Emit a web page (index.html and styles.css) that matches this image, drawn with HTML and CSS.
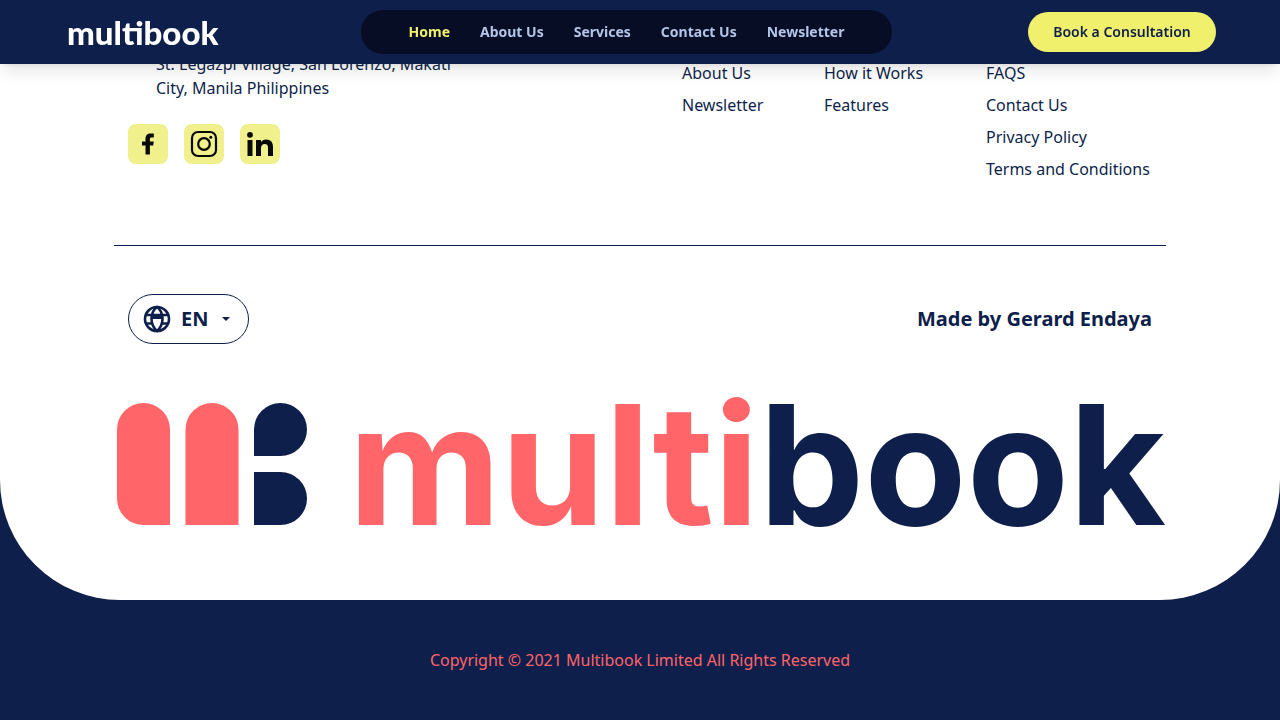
FILE: index.html
```html
<!DOCTYPE html>
<html lang="en">
<head>
<meta charset="utf-8">
<meta name="viewport" content="width=device-width, initial-scale=1">
<title>Multibook</title>
<link rel="stylesheet" href="styles.css">
</head>
<body>
<header class="topbar">
  <a class="brand" href="#">multibook</a>
  <nav class="menu">
    <a class="menu-link active" href="#">Home</a>
    <a class="menu-link" href="#">About Us</a>
    <button class="menu-link" type="button">Services</button>
    <a class="menu-link" href="#">Contact Us</a>
    <a class="menu-link" href="#">Newsletter</a>
  </nav>
  <button class="cta" type="button">Book a Consultation</button>
</header>
<footer class="footer">
  <div class="panel">
    <div class="info">
      <div class="contact">
        <address class="address">St. Legazpi Village, San Lorenzo, Makati City, Manila Philippines</address>
        <div class="socials">
          <a class="social" href="#" aria-label="Facebook">
            <svg viewBox="0 0 40 40"><path d="M17.500 30.500V21.500H14V17.500h3.500V15c0-3.800 2-5.500 5-5.500h3.300v4h-2.200c-1.300 0-1.700.6-1.700 1.700v2.300h3.900l-.6 4h-3.300v9z"/></svg>
          </a>
          <a class="social" href="#" aria-label="Instagram">
            <svg viewBox="0 0 40 40"><rect x="8" y="8" width="24" height="24" rx="6" fill="none" stroke="currentColor" stroke-width="2.200"/><circle cx="20" cy="20" r="5.800" fill="none" stroke="currentColor" stroke-width="2.200"/><circle cx="26.800" cy="13.200" r="1.500"/></svg>
          </a>
          <a class="social" href="#" aria-label="LinkedIn">
            <svg viewBox="0 0 40 40"><circle cx="10" cy="10.800" r="2.900"/><path d="M7.500 16h5v16h-5zM16 16h5v2.200c1-1.700 2.800-2.600 5-2.600 5 0 7 3 7 7.400v9h-5v-8c0-2.500-.8-4-3.200-4-2.500 0-3.800 1.700-3.800 4.300V32h-5z"/></svg>
          </a>
        </div>
      </div>
      <div class="links">
        <ul class="link-list">
          <li><a href="#">About Us</a></li>
          <li><a href="#">Newsletter</a></li>
        </ul>
        <ul class="link-list">
          <li><a href="#">How it Works</a></li>
          <li><a href="#">Features</a></li>
        </ul>
        <ul class="link-list">
          <li><a href="#">FAQS</a></li>
          <li><a href="#">Contact Us</a></li>
          <li><a href="#">Privacy Policy</a></li>
          <li><a href="#">Terms and Conditions</a></li>
        </ul>
      </div>
    </div>
    <hr class="divider">
    <div class="meta">
      <label class="language">
        <svg class="globe" viewBox="0 0 28 28" fill="none" stroke="currentColor" stroke-width="2.600" aria-hidden="true"><circle cx="14" cy="14" r="12"/><path d="M14 2C10 5 8.500 9 8.500 13.500S10.500 23 14 26c3.500-3 5.500-8 5.500-12.500S18 5 14 2zM3 10h22M3 18.500h6M19 18.500h6"/><path d="M9 9h10v5H9z" fill="currentColor" stroke="none"/></svg>
        <select class="language-select" aria-label="Language"><option>EN</option></select>
        <svg class="caret" viewBox="0 0 8 4" fill="currentColor" aria-hidden="true"><path d="M0 0h8L4 4z"/></svg>
      </label>
      <p class="credit">Made by Gerard Endaya</p>
    </div>
    <div class="logo">
      <svg class="logo-mark" viewBox="0 0 190 122" aria-hidden="true">
        <path class="coral" d="M0 26.500a26.500 26.500 0 0 1 53 0V122H26.500A26.500 26.500 0 0 1 0 95.500zM68.500 26.500a26.500 26.500 0 0 1 53 0V122h-53z"/>
        <path class="navy" d="M137 53V26.500A26.500 26.500 0 1 1 163.500 53zM137 69h26.500a26.500 26.500 0 0 1 0 53H137z"/>
      </svg>
      <span class="logo-word"><span class="coral">multi</span><span class="navy">book</span></span>
    </div>
  </div>
  <p class="copyright">Copyright © 2021 Multibook Limited All Rights Reserved</p>
</footer>
</body>
</html>
```
FILE: styles.css
```css
:root {
  --navy: #0e1f4b;
  --coral: #ff6569;
  --yellow: #f0f06d;
}
* { box-sizing: border-box; }
body {
  margin: 0;
  background: var(--navy);
  color: var(--navy);
  font: 16px/24px "Noto Sans", sans-serif;
}
a { color: inherit; text-decoration: none; }
p { margin: 0; }
button, select { font: inherit; color: inherit; border: 0; background: none; padding: 0; cursor: pointer; }

.topbar {
  position: fixed;
  top: 0;
  left: 0;
  right: 0;
  z-index: 1;
  display: flex;
  align-items: center;
  justify-content: space-between;
  height: 64px;
  padding: 0 64px;
  background: var(--navy);
  box-shadow: 0 10px 15px -3px rgba(0, 0, 0, .1), 0 4px 6px -4px rgba(0, 0, 0, .1);
}
.brand {
  flex: 0 0 161px;
  padding-left: 3px;
  color: #fff;
  font: 900 33px/40px Lato, sans-serif;
}
.menu {
  display: flex;
  align-items: center;
  gap: 30px;
  height: 44px;
  padding: 0 48px;
  border-radius: 22px;
  background: #060d24;
}
.menu-link { color: #b3c5e8; font-size: 14px; font-weight: 700; line-height: 20px; }
.menu-link.active { color: var(--yellow); }
.cta {
  min-width: 188px;
  height: 40px;
  padding: 0 24px;
  border-radius: 20px;
  background: var(--yellow);
  font-size: 14px;
  font-weight: 600;
}

.panel {
  padding: 52px 114px 72px;
  border-radius: 0 0 120px 120px;
  background: #fff;
}
.info { display: flex; justify-content: space-between; padding: 0 14px; }
.contact { flex: 0 1 336px; }
.address { padding-left: 28px; font-style: normal; }
.socials { display: flex; gap: 16px; margin-top: 24px; }
.social {
  width: 40px;
  height: 40px;
  border-radius: 8px;
  background: #f0f08c;
  color: #090903;
}
.social svg { display: block; fill: currentColor; }
.links { display: grid; grid-template-columns: 82px 102px 166px; gap: 60px; padding-top: 9px; }
.link-list {
  display: flex;
  flex-direction: column;
  gap: 8px;
  margin: 0;
  padding: 0;
  list-style: none;
}
.divider { margin: 64px 0 48px; border: 0; border-top: 1px solid var(--navy); }
.meta {
  display: flex;
  align-items: center;
  justify-content: space-between;
  padding: 0 14px;
  font-size: 20px;
  font-weight: 700;
}
.language {
  display: flex;
  align-items: center;
  height: 50px;
  padding: 0 18px 0 14px;
  border: 1px solid var(--navy);
  border-radius: 25px;
}
.globe { width: 28px; height: 28px; margin-right: 10px; }
.language-select { appearance: none; }
.caret { width: 8px; height: 4px; margin-left: 13px; }

.logo {
  display: flex;
  align-items: center;
  justify-content: space-between;
  margin-top: 56px;
  padding-left: 3px;
}
.logo-mark { flex: 0 0 190px; }
.logo-word { font: 700 167px/128px Inter, sans-serif; }
.coral { color: var(--coral); fill: var(--coral); }
.navy { color: var(--navy); fill: var(--navy); }

.copyright { padding: 48px 0; color: var(--coral); text-align: center; }
```
